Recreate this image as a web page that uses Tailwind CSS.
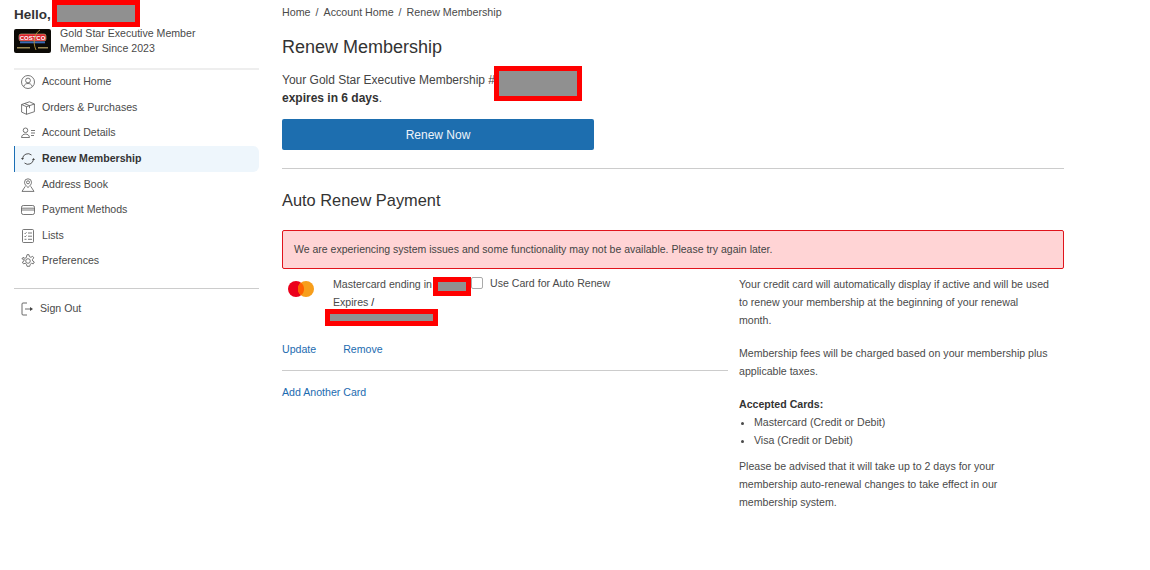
<!DOCTYPE html>
<html lang="en">
<head>
<meta charset="UTF-8">
<title>Renew Membership</title>
<script src="https://cdn.jsdelivr.net/npm/@tailwindcss/browser@4"></script>
</head>
<body class="relative h-[570px] w-[1150px] overflow-hidden bg-white font-['Liberation_Sans',Arial,sans-serif] text-[#333]">

<div class="flex">
  <!-- sidebar -->
  <aside class="ml-[14px] w-[245px] shrink-0">
    <div class="flex h-[25px] items-end text-[13.500px] leading-[20px] font-bold"><span>Hello,</span></div>
    <div class="mt-[1px] flex gap-[9px]">
      <svg class="mt-[3px] h-[24px] w-[37px]" viewBox="0 0 37 24">
        <rect width="37" height="24" rx="2" fill="#0c0a06"/>
        <rect x="5" y="5" width="27" height="7" rx="2" fill="#d8202a" stroke="#e8d9a0" stroke-width=".5"/>
        <text x="18.500" y="10.800" text-anchor="middle" font-size="6" font-weight="700" fill="#fff" font-family="Liberation Sans">COSTCO</text>
        <rect x="6" y="12.500" width="25" height="1.800" fill="#3a6ab8"/>
        <path d="M26 1c-5 3-8 11-4 20" fill="none" stroke="#b8963c" stroke-width=".9"/>
        <rect x="3" y="18" width="13" height="1.500" fill="#9c8a55"/>
        <rect x="24" y="18" width="10" height="1.500" fill="#9c8a55"/>
      </svg>
      <div class="text-[10.600px] leading-[15px] text-[#4a4a4a]">
        <p>Gold Star Executive Member</p>
        <p>Member Since 2023</p>
      </div>
    </div>
    <div class="mt-[12px] border-t-2 border-[#eee]"></div>
    <nav class="-mt-[0.5px] text-[10.600px] text-[#4a4a4a]">
      <a class="flex h-[25.500px] items-center pl-[7px]">
        <svg class="mr-[7px] h-[14px] w-[14px]" viewBox="0 0 14 14" fill="none" stroke="#555" stroke-width=".8"><circle cx="7" cy="7" r="6.500"/><circle cx="7" cy="5.500" r="2.400"/><path d="M2.800 11.500c.5-2.200 2.200-3 4.200-3s3.700.8 4.200 3"/></svg>
        Account Home
      </a>
      <a class="flex h-[25.500px] items-center pl-[7px]">
        <svg class="mr-[7px] h-[14px] w-[14px]" viewBox="0 0 14 14" fill="none" stroke="#555" stroke-width=".8"><path d="M.6 3.500 8.500.8l4.900 2.200v7.700l-7.900 2.600-4.900-2.200zM.6 3.500l4.900 2.200 7.900-2.700M5.500 5.700v7.600M3.500 2.500l5 2.200v2.500"/></svg>
        Orders &amp; Purchases
      </a>
      <a class="flex h-[25.500px] items-center pl-[7px]">
        <svg class="mr-[7px] h-[14px] w-[14px]" viewBox="0 0 14 14" fill="none" stroke="#555" stroke-width=".8"><circle cx="4.500" cy="4.300" r="2.300"/><path d="M.5 11.500c.2-2.400 2-3.400 4-3.400s3.800 1 4 3.400zM10 4.500h4M10 7h4M10 9.500h3"/></svg>
        Account Details
      </a>
      <a class="flex h-[26px] items-center rounded-r-[6px] border-l border-[#1b6fb5] bg-[#eef6fc] pl-[6px] font-bold text-[#333]">
        <svg class="mr-[7px] h-[14px] w-[14px]" viewBox="0 0 14 14" fill="none" stroke="#444" stroke-width=".9"><path d="M1.500 6.500A5.500 5.500 0 0 1 10.500 3M12.500 7.500A5.500 5.500 0 0 1 3.500 11"/><path d="M0 6h3L1.500 8zM11 8h3l-1.500-2z" fill="#444" stroke="none"/></svg>
        Renew Membership
      </a>
      <a class="flex h-[25.500px] items-center pl-[7px]">
        <svg class="mr-[7px] h-[14px] w-[14px]" viewBox="0 0 14 14" fill="none" stroke="#555" stroke-width=".8"><path d="M7 9.500C5 7.800 3.500 6.300 3.500 4.300a3.500 3.500 0 0 1 7 0c0 2-1.500 3.500-3.500 5.200z"/><circle cx="7" cy="4.300" r="1.500"/><path d="M4.300 8.300 1 13.400h12L9.700 8.300"/></svg>
        Address Book
      </a>
      <a class="flex h-[25.500px] items-center pl-[7px]">
        <svg class="mr-[7px] h-[14px] w-[14px]" viewBox="0 0 14 14" fill="none" stroke="#555" stroke-width=".8"><rect x=".5" y="2.500" width="13" height="9" rx="1.800"/><path d="M.5 5.200h13M.5 7h13"/></svg>
        Payment Methods
      </a>
      <a class="flex h-[25.500px] items-center pl-[7px]">
        <svg class="mr-[7px] h-[14px] w-[14px]" viewBox="0 0 14 14" fill="none" stroke="#555" stroke-width=".8"><rect x="1.500" y=".5" width="11" height="13" rx="1"/><path d="M3.500 4l.7.7L5.500 3.300M7 4h4M3.500 7.200l.7.7 1.300-1.400M7 7.200h4M3.500 10.300h2M7 10.300h4"/></svg>
        Lists
      </a>
      <a class="flex h-[25.500px] items-center pl-[7px]">
        <svg class="mr-[7px] h-[14px] w-[14px]" viewBox="0 0 14 14" fill="none" stroke="#555" stroke-width=".8"><circle cx="7" cy="7" r="2.300"/><path d="M6 .7h2l.4 1.900 1.500.7 1.700-1 1.200 1.600-1.300 1.400.2 1.700 1.600 1-1 1.800-1.800-.5-1.300 1.100-.5 1.900H6l-.5-1.900-1.300-1.100-1.800.5-1-1.800 1.600-1 .2-1.700L.9 4.900l1.200-1.600 1.700 1 1.500-.7z"/></svg>
        Preferences
      </a>
    </nav>
    <div class="mt-[13.500px] border-t border-[#ccc]"></div>
    <a class="mt-[13px] flex h-[15px] items-center pl-[7px] text-[10.600px] text-[#4a4a4a]">
      <svg class="mr-[6px] h-[14px] w-[13px]" viewBox="0 0 13 14" fill="none" stroke="#444" stroke-width=".8"><path d="M6 1H2a1 1 0 0 0-1 1v10a1 1 0 0 0 1 1h4"/><path d="M4 7h6"/><path d="M9 5l3 2-3 2z" fill="#444" stroke="none"/></svg>
      Sign Out
    </a>
  </aside>

  <!-- main -->
  <main class="ml-[23px] w-[782px]">
    <div class="mt-[6px] flex h-[13px] items-center gap-[5px] text-[10.700px] text-[#4a4a4a]">
      <span>Home</span><span>/</span><span>Account Home</span><span>/</span><span>Renew Membership</span>
    </div>
    <h1 class="mt-[17px] text-[18px] leading-[22px]">Renew Membership</h1>
    <p class="mt-[13px] text-[12px] leading-[18px] text-[#444]">Your Gold Star Executive Membership #<br><b class="text-[#333]">expires in 6 days</b>.</p>
    <button class="mt-[12px] block h-[31px] w-[312px] rounded-[2px] bg-[#1d6eaf] text-[12px] text-[#eef4fa]">Renew Now</button>
    <div class="mt-[18px] border-t border-[#ccc]"></div>
    <h2 class="mt-[21px] text-[16.400px] leading-[20px]">Auto Renew Payment</h2>
    <div class="mt-[20px] flex h-[39px] items-center rounded-[2px] border border-[#e0141c] bg-[#ffd4d5] pl-[11px] text-[10.500px] text-[#444]">We are experiencing system issues and some functionality may not be available. Please try again later.</div>

    <div class="flex">
      <div class="w-[446px] shrink-0">
        <div class="flex">
          <svg class="mt-[12px] ml-[6px] h-[16px] w-[26px]" viewBox="0 0 26 16"><circle cx="8" cy="8" r="8" fill="#eb001b"/><circle cx="18" cy="8" r="8" fill="#f79e1b"/><path d="M13 1.700a8 8 0 0 1 0 12.600 8 8 0 0 1 0-12.600z" fill="#ff5f00"/></svg>
          <div class="ml-[19px] mt-[6px] w-[100px] shrink-0 text-[10.600px] leading-[18px] text-[#4a4a4a]">
            <p class="whitespace-nowrap">Mastercard ending in</p>
            <p>Expires <span class="text-[#222]">/</span></p>
          </div>
          <input type="checkbox" class="mt-[8px] ml-[38px] h-[12px] w-[12px] appearance-none rounded-[2px] border border-[#aaa] bg-white">
          <span class="mt-[7px] ml-[7px] text-[10.600px] leading-[14px] text-[#4a4a4a]">Use Card for Auto Renew</span>
        </div>
        <div class="mt-[31px] flex gap-[27px] text-[10.600px] leading-[14px] text-[#1c6bb0]"><a>Update</a><a>Remove</a></div>
        <div class="mt-[14px] border-t border-[#ccc]"></div>
        <a class="mt-[14px] block text-[10.600px] leading-[14px] text-[#1c6bb0]">Add Another Card</a>
      </div>
      <div class="ml-[11px] mt-[6px] w-[314px] text-[10.600px] leading-[18px] text-[#4a4a4a]">
        <p>Your credit card will automatically display if active and will be used to renew your membership at the beginning of your renewal month.</p>
        <p class="mt-[15px]">Membership fees will be charged based on your membership plus applicable taxes.</p>
        <p class="mt-[15px] font-bold text-[#333]">Accepted Cards:</p>
        <ul class="list-disc pl-[15px]">
          <li>Mastercard (Credit or Debit)</li>
          <li>Visa (Credit or Debit)</li>
        </ul>
        <p class="mt-[8px]">Please be advised that it will take up to 2 days for your membership auto-renewal changes to take effect in our membership system.</p>
      </div>
    </div>
  </main>
</div>

<!-- redaction boxes sit over the text -->
<div class="absolute top-0 left-[52px] h-[27px] w-[88px] border-[5px] border-[#f00] bg-[#909090]"></div>
<div class="absolute top-[66px] left-[494px] h-[35px] w-[88px] border-[5px] border-[#f00] bg-[#909090]"></div>
<div class="absolute top-[277px] left-[433px] h-[19px] w-[38px] border-[5px] border-[#f00] bg-[#909090]"></div>
<div class="absolute top-[309px] left-[325px] h-[17px] w-[113px] border-[5px] border-[#f00] bg-[#909090]"></div>
</body>
</html>
